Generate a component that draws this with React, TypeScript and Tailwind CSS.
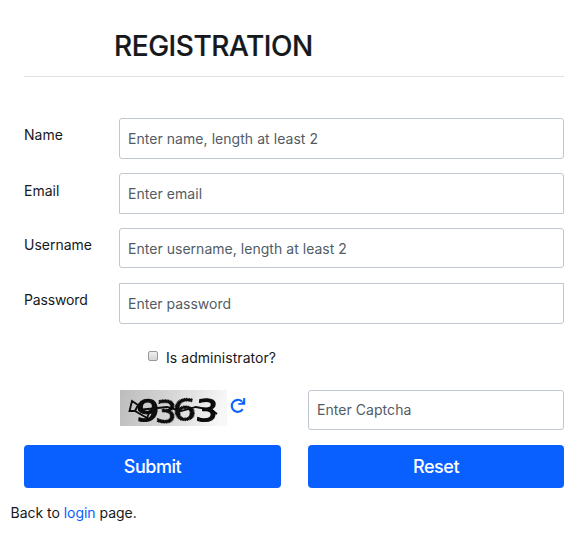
import React from "react";

const field =
  "block w-full border border-[#c1c7d0] bg-white pl-2 text-[14px] text-[#212529] outline-none placeholder:text-[#525c65] placeholder:opacity-100";

function Row({ label, placeholder, type = "text", shape, gap, labelTop, spacing }: {
  label: string; placeholder: string; type?: string; shape: string; gap: string; labelTop: string; spacing: string;
}) {
  return (
    <div className={`flex ${gap}`}>
      <label className={`w-[95px] shrink-0 ${labelTop} leading-5`}>{label}</label>
      <input type={type} placeholder={placeholder} className={`${field} ${shape} ${spacing}`} />
    </div>
  );
}

function Captcha() {
  return (
    <svg width="107" height="36" viewBox="0 0 107 36" className="shrink-0 overflow-visible">
      <defs>
        <linearGradient id="fade" x1="0" y1="0" x2="1" y2="0.1">
          <stop offset="0" stopColor="#bcbcbc" />
          <stop offset="0.5" stopColor="#d6d6d6" />
          <stop offset="1" stopColor="#f7f7f7" />
        </linearGradient>
        <filter id="ink" x="-10%" y="-10%" width="120%" height="120%">
          <feGaussianBlur stdDeviation="0.55" />
        </filter>
      </defs>
      <rect width="107" height="36" fill="url(#fade)" />
      <g filter="url(#ink)">
        <g fontFamily="DejaVu Sans, sans-serif" fontSize="29" fill="#080808" stroke="#080808" strokeWidth="1.3" strokeLinejoin="round">
          <text transform="translate(15 31) skewX(-4) scale(1.28 1)">9</text>
          <text transform="translate(35 32) rotate(3) scale(1.15 1.05)" strokeDasharray="0.8 0.5">3</text>
          <text transform="translate(53 30.5) rotate(-2) scale(1.28 1)" strokeDasharray="0.8 0.5">6</text>
          <text transform="translate(75 31) skewX(-4) scale(1.2 1.03)">3</text>
        </g>
        <path d="M12 11 L18 15 L15 21 L9.5 21 Z M15 21 L27 28 L30 21 M18 20 L47 17 L61 21 L76 17 L92 20 L97 24" fill="none" stroke="#080808" strokeWidth="1.8" />
      </g>
    </svg>
  );
}

export default function App() {
  return (
    <main className="h-[537px] w-full overflow-hidden bg-white font-[Inter,sans-serif] text-[14px] text-[#16191c]">
      <form className="px-6 pr-[19px] pt-[28px]">
        <h1 className="ml-[90px] h-9 text-[28px] font-medium leading-9 tracking-[-0.45px] [-webkit-text-stroke:0.2px_#16191c]">REGISTRATION</h1>
        <hr className="mt-3 border-t border-[#e0e1e2]" />
        <Row label="Name" placeholder="Enter name, length at least 2" gap="mt-[41px]" shape="h-[41px] rounded-[3px]" labelTop="pt-[7px]" spacing="tracking-[0.05px]" />
        <Row label="Email" placeholder="Enter email" gap="mt-[14px]" shape="h-[41px] rounded-t-[3px]" labelTop="pt-[8px]" spacing="tracking-[0.05px]" />
        <Row label="Username" placeholder="Enter username, length at least 2" gap="mt-[14px]" shape="h-[40px] rounded-[3px]" labelTop="pt-[7px]" spacing="tracking-[0.03px]" />
        <Row label="Password" placeholder="Enter password" type="password" gap="mt-[15px]" shape="h-[41px] rounded-b-[3px]" labelTop="pt-[7px] tracking-[-0.15px]" spacing="" />
        <label className="ml-[124px] mt-6 flex h-5 w-fit items-center leading-5 tracking-[0.05px]">
          <input type="checkbox" className="mb-[4px] mr-2 size-[10px] appearance-none rounded-[2px] border border-[#999] bg-linear-to-b from-[#eee] to-[#d5d5d5]" />
          Is administrator?
        </label>
        <div className="mt-[22px] flex">
          <div className="ml-[95px] flex w-[189px] shrink-0 pl-px">
            <Captcha />
            <svg width="17" height="17" viewBox="0 0 17 17" className="ml-[3px] mt-[7px]" fill="none" stroke="#0a62ff" strokeWidth="2.1">
              <path d="M12.7 12.2 A6 6 0 1 1 12 4.6" />
              <path d="M15.2 1 V7.8 H8.2 V6.3 L11.3 5.9 L13.2 3.8 V1 Z" fill="#0a62ff" stroke="none" />
            </svg>
          </div>
          <input placeholder="Enter Captcha" className={`${field} h-10 rounded-[3px] pb-[2px] tracking-[0.05px]`} />
        </div>
        <div className="mt-[15px] grid grid-cols-[257px_256px] gap-[27px] text-[18px] font-medium tracking-[-0.45px] text-white">
          <button type="button" className="h-[43px] rounded bg-[#0a60ff]">Submit</button>
          <button type="button" className="h-[43px] rounded bg-[#0a60ff]">Reset</button>
        </div>
      </form>
      <p className="ml-[10.5px] mt-[15px] leading-5 tracking-[-0.03px]">Back to <a className="text-[#0a60ff]">login</a> page.</p>
    </main>
  );
}
